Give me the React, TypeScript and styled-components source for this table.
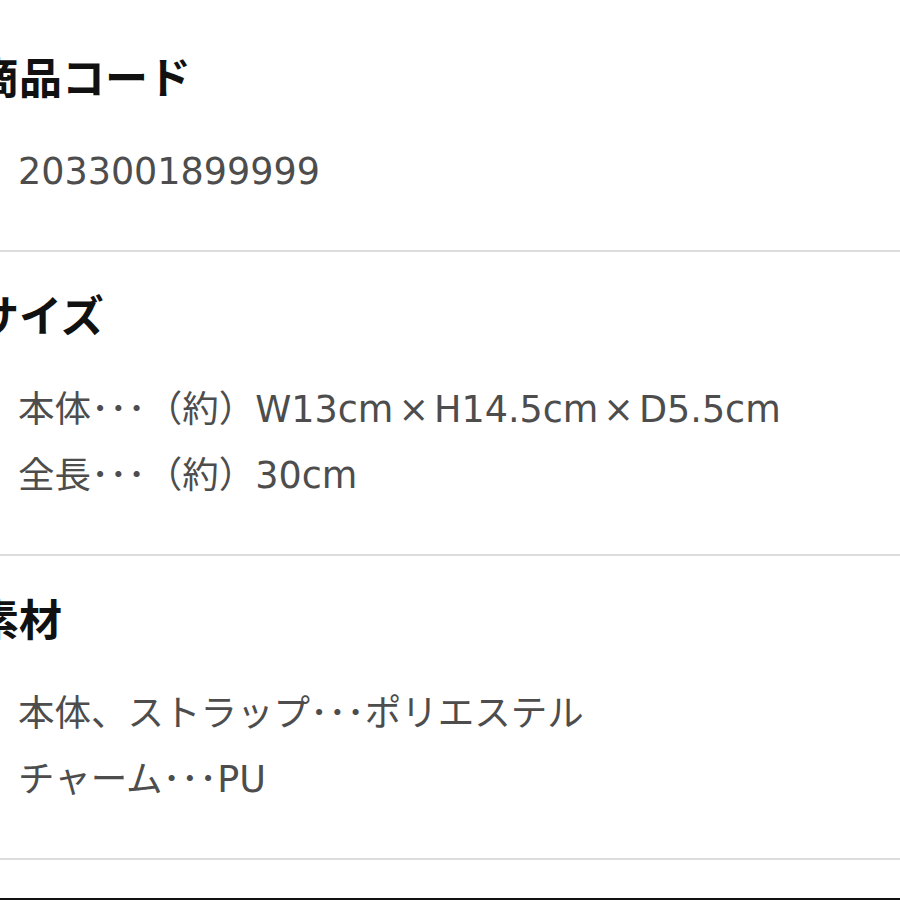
import React from "react";
import styled, { createGlobalStyle } from "styled-components";

const Global = createGlobalStyle`
  html, body { margin: 0; padding: 0; background: #ffffff; }
  body { width: 900px; height: 900px; overflow: hidden; }
`;

const Page = styled.div`
  width: 900px;
  height: 900px;
  box-sizing: border-box;
  padding-top: 14px;
  background: #ffffff;
  border-bottom: 2px solid #111;
  overflow: hidden;
  font-family: "DejaVu Sans", "Noto Sans CJK JP", sans-serif;
`;

const Section = styled.section`
  padding: 33px 0 45px;
  border-bottom: 2px solid #dcdcdc;
`;

const Heading = styled.h2`
  margin: 0 0 0 -24px;
  font-family: "Noto Sans CJK JP", sans-serif;
  font-size: 43px;
  line-height: 56px;
  font-weight: 700;
  color: #111;
`;

const Body = styled.div`
  margin-top: 36px;
  padding-left: 18px;
  font-size: 36.5px;
  line-height: 66px;
  color: #4d4d4d;
`;

const Line = styled.div`
  white-space: nowrap;
`;

const Times = styled.span`
  display: inline-block;
  padding: 0 5px;
`;

const renderLine = (text: string) => {
  const parts = text.split("×");
  return parts.map((p, i) => (
    <React.Fragment key={i}>
      {i > 0 && <Times>×</Times>}
      {p}
    </React.Fragment>
  ));
};

const sections = [
  { title: "商品コード", lines: ["2033001899999"] },
  {
    title: "サイズ",
    lines: ["本体･･･（約）W13cm×H14.5cm×D5.5cm", "全長･･･（約）30cm"],
  },
  { title: "素材", lines: ["本体、ストラップ･･･ポリエステル", "チャーム･･･PU"] },
];

export default function App() {
  return (
    <>
      <Global />
      <Page>
        {sections.map((s) => (
          <Section key={s.title}>
            <Heading>{s.title}</Heading>
            <Body>
              {s.lines.map((l) => (
                <Line key={l}>{renderLine(l)}</Line>
              ))}
            </Body>
          </Section>
        ))}
      </Page>
    </>
  );
}
